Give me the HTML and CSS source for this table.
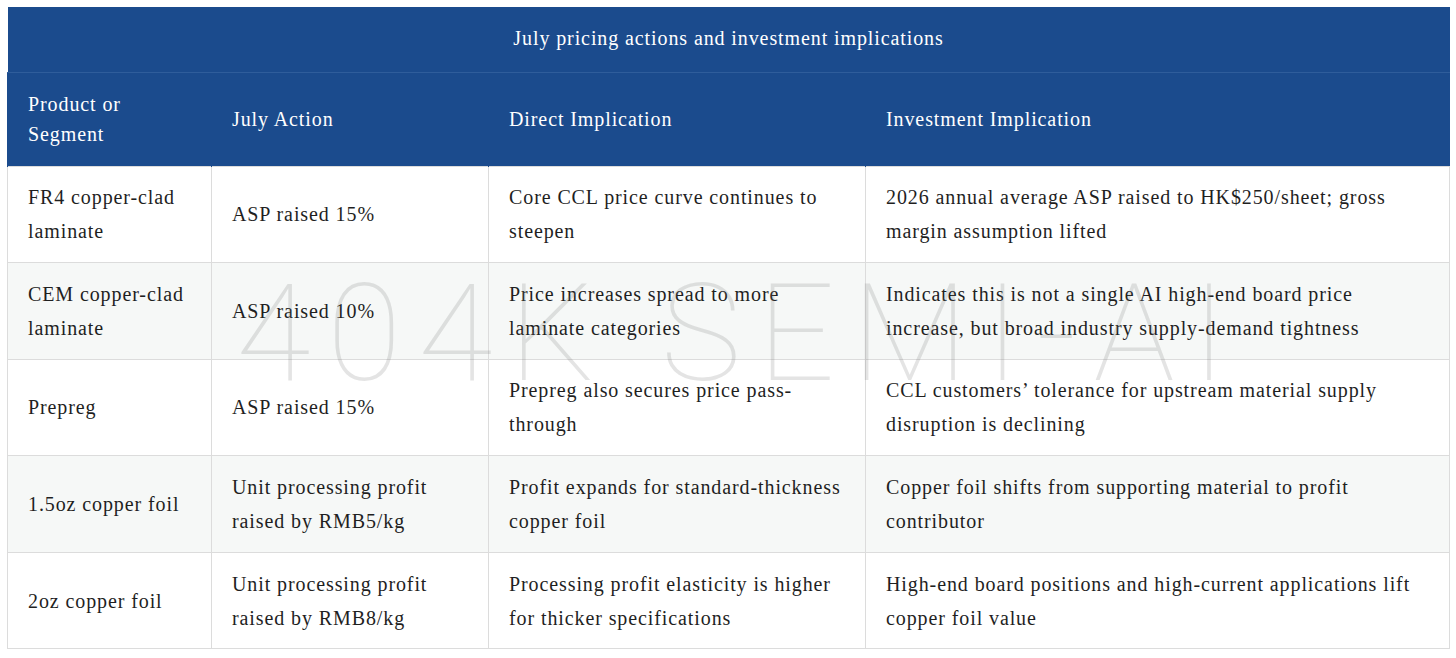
FILE: index.html
```html
<!DOCTYPE html>
<html lang="en">
<head>
<meta charset="utf-8">
<title>July pricing actions and investment implications</title>
<link rel="stylesheet" href="styles.css">
</head>
<body>
<div class="wrap">
  <table class="pricing">
    <colgroup>
      <col class="c1"><col class="c2"><col class="c3"><col class="c4">
    </colgroup>
    <thead>
      <tr class="title-row"><th colspan="4">July pricing actions and investment implications</th></tr>
      <tr class="head-row">
        <th>Product or<br>Segment</th>
        <th>July Action</th>
        <th>Direct Implication</th>
        <th>Investment Implication</th>
      </tr>
    </thead>
    <tbody>
      <tr>
        <td>FR4 copper-clad laminate</td>
        <td>ASP raised 15%</td>
        <td>Core CCL price curve continues to steepen</td>
        <td>2026 annual average ASP raised to HK$250/sheet; gross margin assumption lifted</td>
      </tr>
      <tr class="alt">
        <td>CEM copper-clad laminate</td>
        <td>ASP raised 10%</td>
        <td>Price increases spread to more laminate categories</td>
        <td>Indicates this is not a single AI high-end board price increase, but broad industry supply-demand tightness</td>
      </tr>
      <tr>
        <td>Prepreg</td>
        <td>ASP raised 15%</td>
        <td>Prepreg also secures price pass-through</td>
        <td>CCL customers’ tolerance for upstream material supply disruption is declining</td>
      </tr>
      <tr class="alt">
        <td>1.5oz copper foil</td>
        <td>Unit processing profit raised by RMB5/kg</td>
        <td>Profit expands for standard-thickness copper foil</td>
        <td>Copper foil shifts from supporting material to profit contributor</td>
      </tr>
      <tr>
        <td>2oz copper foil</td>
        <td>Unit processing profit raised by RMB8/kg</td>
        <td>Processing profit elasticity is higher for thicker specifications</td>
        <td>High-end board positions and high-current applications lift copper foil value</td>
      </tr>
    </tbody>
  </table>
  <div class="watermark">404K SEMI-AI</div>
</div>
</body>
</html>
```
FILE: styles.css
```css
html, body {
  margin: 0;
  padding: 0;
  background: #ffffff;
}
body {
  font-family: "Liberation Serif", "DejaVu Serif", serif;
  color: #1f1f1f;
}
.wrap {
  position: relative;
  padding: 7px;
}
.pricing {
  width: 1442px;
  border-collapse: collapse;
  table-layout: fixed;
  font-size: 20px;
  letter-spacing: 0.9px;
}
.c1 { width: 204px; }
.c2 { width: 277px; }
.c3 { width: 377px; }
.c4 { width: 584px; }

.pricing th {
  background: #1b4b8d;
  color: #ffffff;
  font-weight: normal;
  text-align: left;
}
.title-row th {
  height: 65px;
  box-sizing: border-box;
  padding: 0 0 2px;
  text-align: center;
  border-bottom: 1px solid #2f5d9b;
}
.head-row th {
  height: 94px;
  box-sizing: border-box;
  padding: 0 20px;
  line-height: 30px;
  border-left: 1px solid #1b4b8d;
}
.pricing td {
  height: 96.6px;
  box-sizing: border-box;
  padding: 0 20px;
  line-height: 34px;
  vertical-align: middle;
  border: 1px solid #dcdcdc;
}
.pricing tr.alt td {
  background: #f6f8f7;
}
.watermark {
  position: absolute;
  left: 236px;
  top: 266px;
  font-family: "Roboto", "Liberation Sans", sans-serif;
  font-weight: 100;
  font-size: 136px;
  line-height: 1;
  letter-spacing: 16.5px;
  color: rgba(120, 120, 120, 0.2);
  white-space: nowrap;
  pointer-events: none;
}
```
